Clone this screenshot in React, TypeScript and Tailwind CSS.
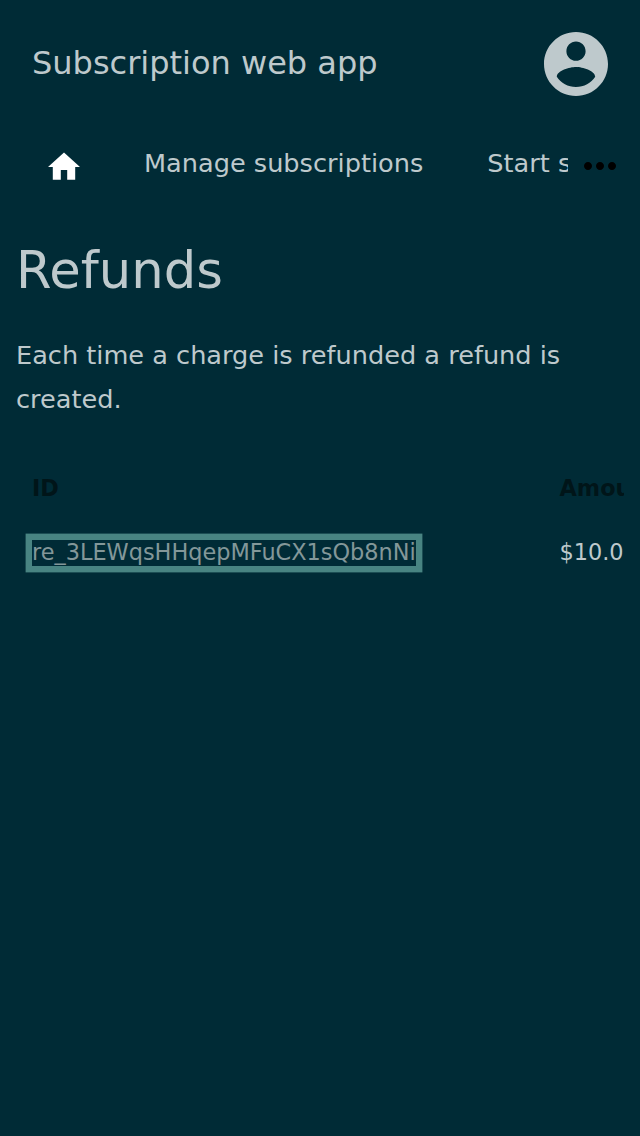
export default function App() {
  return (
    <div className="min-h-[1136px] w-[640px] overflow-hidden bg-[#002b36] font-['DejaVu_Sans',sans-serif] text-[#bec9cc]">
      <header className="flex h-32 items-center justify-between px-8">
        <div className="pb-0.5 text-[32px] leading-[48px]">Subscription web app</div>
        <svg className="size-16" viewBox="2 2 20 20" fill="currentColor">
          <path d="M12 2C6.48 2 2 6.48 2 12s4.48 10 10 10 10-4.48 10-10S17.52 2 12 2zm0 3c1.66 0 3 1.34 3 3s-1.34 3-3 3-3-1.34-3-3 1.34-3 3-3zm0 14.2c-2.5 0-4.71-1.28-6-3.22.03-1.99 4-3.08 6-3.08 1.99 0 5.97 1.09 6 3.08-1.29 1.94-3.5 3.22-6 3.22z" />
        </svg>
      </header>
      <nav className="flex h-[72px] items-center">
        <div className="flex h-full w-[568px] items-center overflow-hidden whitespace-nowrap text-[25.6px] leading-[38px]">
          <svg className="ml-12 mt-1 h-7 w-8 shrink-0 text-white" viewBox="2 2.7 20 17.5" fill="currentColor">
            <path d="M10 20v-6h4v6h5v-8h3L12 3 2 12h3v8z" />
          </svg>
          <a className="ml-16 pb-0.5">Manage subscriptions</a>
          <a className="ml-16 pb-0.5">Start subscription</a>
        </div>
        <svg className="ml-2 mt-1 size-12" viewBox="0 0 24 24" fill="#000">
          <path d="M6 10c-1.100 0-2 .9-2 2s.9 2 2 2 2-.9 2-2-.9-2-2-2zm12 0c-1.100 0-2 .9-2 2s.9 2 2 2 2-.9 2-2-.9-2-2-2zm-6 0c-1.100 0-2 .9-2 2s.9 2 2 2 2-.9 2-2-.9-2-2-2z" />
        </svg>
      </nav>
      <main className="px-4 pt-10">
        <h1 className="text-[51.200px] leading-[60px]">Refunds</h1>
        <p className="mt-[33px] text-[25.6px] leading-[44px]">Each time a charge is refunded a refund is created.</p>
        <div className="mt-[35px] overflow-hidden text-[22.400px] leading-[26px]">
          <div className="flex h-16 w-[800px] items-center font-bold text-[#001519]">
            <div className="ml-4 w-[527.5px]">ID</div>
            <div>Amount</div>
          </div>
          <div className="flex h-16 w-[800px] items-center">
            <div className="ml-4 mt-0.5 flex w-[527.5px]">
              <a className="h-[26px] leading-6 text-[#839799] shadow-[0_0_0_6.4px_#488482]">re_3LEWqsHHqepMFuCX1sQb8nNi</a>
            </div>
            <div>$10.00</div>
          </div>
        </div>
      </main>
    </div>
  );
}
